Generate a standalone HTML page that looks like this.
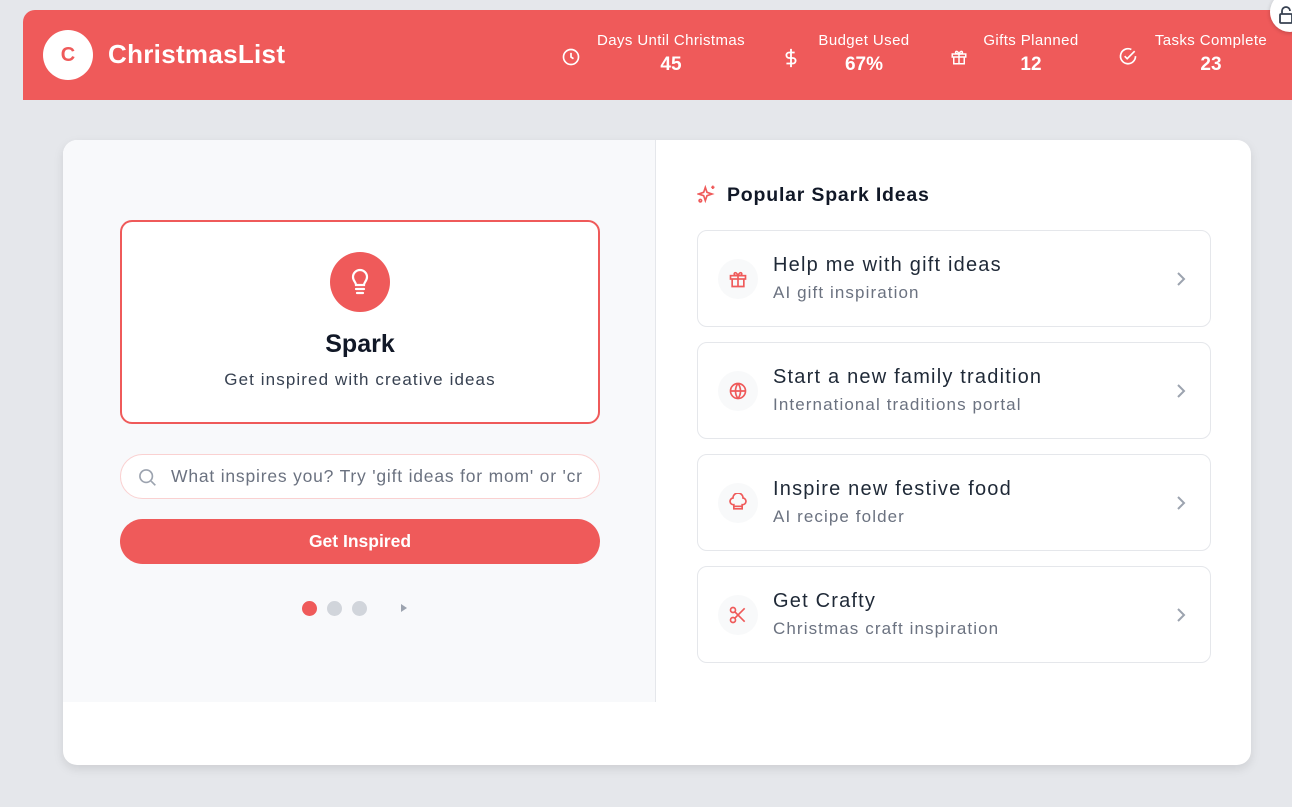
<!DOCTYPE html>
<html><head><meta charset="utf-8"><style>
*{box-sizing:border-box;margin:0;padding:0}
body{width:1292px;height:807px;background:#e5e7eb;font-family:"Liberation Sans",sans-serif;position:relative;overflow:hidden}
.hdr{position:absolute;left:23px;top:10px;width:1280px;height:90px;background:#ef5a5a;border-radius:12px 0 0 0}
.logo{position:absolute;left:20px;top:20px;width:50px;height:50px;border-radius:50%;background:#fff;color:#ef5a5a;font-weight:bold;font-size:20px;text-align:center;line-height:50px}
.brand{position:absolute;left:85px;top:29px;color:#fff;font-weight:bold;font-size:26px;letter-spacing:0.3px}
.stat{position:absolute;top:22px;color:#fff;text-align:center}
.stat .l{font-size:15px;letter-spacing:0.4px}
.stat .v{font-size:19px;font-weight:bold;margin-top:5px}
.stat svg{position:absolute;top:15px}
.lock{position:absolute;left:1270px;top:-8px;width:40px;height:40px;border-radius:50%;background:#fff;box-shadow:0 1px 4px rgba(0,0,0,.2)}
.card{position:absolute;left:63px;top:140px;width:1188px;height:625px;background:#fff;border-radius:14px;box-shadow:0 4px 10px rgba(0,0,0,.1);overflow:hidden}
.left{position:absolute;left:0;top:0;width:593px;height:562px;background:#f8f9fb;border-right:1px solid #e5e7eb}
.spark{position:absolute;left:57px;top:80px;width:480px;height:204px;border:2px solid #ef5a5a;border-radius:12px;background:#fff;text-align:center}
.bulb{position:absolute;left:208px;top:30px;width:60px;height:60px;border-radius:50%;background:#ef5a5a}
.spark h2{position:absolute;left:0;right:0;top:108px;font-size:25px;color:#111827}
.spark p{position:absolute;left:0;right:0;top:148px;font-size:17px;color:#374151;letter-spacing:1.1px}
.search{position:absolute;left:57px;top:314px;width:480px;height:45px;border:1px solid #fad1d1;border-radius:23px;background:#fff;font-size:17.5px;color:#6b7280;line-height:43px;padding-left:50px;white-space:nowrap;overflow:hidden;letter-spacing:0.8px}
.btn{position:absolute;left:57px;top:379px;width:480px;height:45px;border-radius:23px;background:#ef5a5a;color:#fff;font-weight:bold;font-size:17.5px;text-align:center;line-height:45px}
.dot{position:absolute;top:461px;width:15px;height:15px;border-radius:50%;background:#d1d5db}
.rh{position:absolute;left:664px;top:44px;font-size:19.5px;font-weight:bold;color:#111827;letter-spacing:0.8px}
.item{position:absolute;left:634px;width:514px;height:97px;border:1px solid #e5e7eb;border-radius:10px;background:#fff}
.item .ic{position:absolute;left:20px;top:28px;width:40px;height:40px;border-radius:50%;background:#f8f9fa}
.item .ic svg{position:absolute;left:10px;top:10px}
.item .t{position:absolute;left:75px;top:23px;font-size:20px;color:#1f2937;letter-spacing:1.2px}
.item .s{position:absolute;left:75px;top:52px;font-size:17px;color:#6b7280;letter-spacing:1.1px}
.item .ch{position:absolute;right:24px;top:40px}
</style></head><body>
<div class="hdr">
<div class="logo">C</div>
<div class="brand">ChristmasList</div>
<div class="stat" style="left:563px;width:170px"><svg style="left:-25px" width="20" height="20" viewBox="0 0 24 24" fill="none" stroke="#fff" stroke-width="2"><circle cx="12" cy="12" r="9"/><path d="M12 7v5l3 2"/></svg><div class="l">Days Until Christmas</div><div class="v">45</div></div>
<div class="stat" style="left:785px;width:112px"><svg style="left:-25px" width="16" height="22" viewBox="0 0 16 24" fill="none" stroke="#fff" stroke-width="2"><path d="M8 2v20M12 6H6a3 3 0 0 0 0 6h4a3 3 0 0 1 0 6H3"/></svg><div class="l">Budget Used</div><div class="v">67%</div></div>
<div class="stat" style="left:952px;width:112px"><svg style="left:-25px" width="18" height="20" viewBox="0 0 24 24" fill="none" stroke="#fff" stroke-width="2"><rect x="3" y="8" width="18" height="4"/><path d="M12 8v13M19 12v9H5v-9M12 8C10 3 7 4 7.5 6.5 8 8 12 8 12 8M12 8c2-5 5-4 4.5-1.5C16 8 12 8 12 8"/></svg><div class="l">Gifts Planned</div><div class="v">12</div></div>
<div class="stat" style="left:1122px;width:132px"><svg style="left:-27px" width="20" height="20" viewBox="0 0 24 24" fill="none" stroke="#fff" stroke-width="2"><path d="M21 11a9 9 0 1 1-5-8"/><path d="M8 11l3 3 9-9"/></svg><div class="l">Tasks Complete</div><div class="v">23</div></div>
</div>
<div class="lock"><svg style="position:absolute;left:8px;top:14px" width="16" height="18" viewBox="0 0 16 18" fill="none" stroke="#374151" stroke-width="1.8"><rect x="2" y="8" width="12" height="9" rx="1"/><path d="M4 8V5a4 4 0 0 1 8 0"/></svg></div>
<div class="card">
<div class="left">
<div class="spark"><div class="bulb"><svg style="position:absolute;left:18px;top:16px" width="24" height="28" viewBox="0 0 24 28" fill="none" stroke="#fff" stroke-width="2.2" stroke-linecap="round"><path d="M8 17c0-3-3-4-3-8a7 7 0 0 1 14 0c0 4-3 5-3 8z"/><path d="M8 21h8M9 25h6"/></svg></div><h2>Spark</h2><p>Get inspired with creative ideas</p></div>
<div class="search"><svg style="position:absolute;left:16px;top:12px" width="20" height="20" viewBox="0 0 24 24" fill="none" stroke="#9ca3af" stroke-width="2"><circle cx="11" cy="11" r="7.5"/><path d="M17 17l5 5"/></svg>What inspires you? Try 'gift ideas for mom' or 'cr</div>
<div class="btn">Get Inspired</div>
<div class="dot" style="left:239px;background:#ef5a5a"></div>
<div class="dot" style="left:264px"></div>
<div class="dot" style="left:289px"></div>
<svg style="position:absolute;left:337px;top:464px" width="7" height="8" viewBox="0 0 7 8"><path d="M1 0l6 4-6 4z" fill="#9ca3af"/></svg>
</div>
<svg style="position:absolute;left:634px;top:44px" width="20" height="20" viewBox="0 0 24 24" fill="none" stroke="#ef5a5a" stroke-width="2"><path d="M10 4l2 6 6 2-6 2-2 6-2-6-6-2 6-2z"/><path d="M19 2v4M17 4h4"/><circle cx="4" cy="20" r="1.5"/></svg>
<div class="rh">Popular Spark Ideas</div>
<div class="item" style="top:90px"><div class="ic"><svg width="20" height="20" viewBox="0 0 24 24" fill="none" stroke="#ef5a5a" stroke-width="2"><rect x="3" y="8" width="18" height="4"/><path d="M12 8v13M19 12v9H5v-9M12 8C10 3 7 4 7.5 6.5 8 8 12 8 12 8M12 8c2-5 5-4 4.5-1.5C16 8 12 8 12 8"/></svg></div><div class="t">Help me with gift ideas</div><div class="s">AI gift inspiration</div><svg class="ch" width="10" height="16" viewBox="0 0 10 16" fill="none" stroke="#9ca3af" stroke-width="2"><path d="M2 2l6 6-6 6"/></svg></div>
<div class="item" style="top:202px"><div class="ic"><svg width="20" height="20" viewBox="0 0 24 24" fill="none" stroke="#ef5a5a" stroke-width="2"><circle cx="12" cy="12" r="9"/><path d="M3 12h18M12 3c-4 5-4 13 0 18M12 3c4 5 4 13 0 18"/></svg></div><div class="t">Start a new family tradition</div><div class="s">International traditions portal</div><svg class="ch" width="10" height="16" viewBox="0 0 10 16" fill="none" stroke="#9ca3af" stroke-width="2"><path d="M2 2l6 6-6 6"/></svg></div>
<div class="item" style="top:314px"><div class="ic"><svg width="20" height="20" viewBox="0 0 24 24" fill="none" stroke="#ef5a5a" stroke-width="2"><path d="M7 14a4 4 0 0 1-1-8 6 6 0 0 1 12 0 4 4 0 0 1-1 8v5H7z"/><path d="M7 16h10"/></svg></div><div class="t">Inspire new festive food</div><div class="s">AI recipe folder</div><svg class="ch" width="10" height="16" viewBox="0 0 10 16" fill="none" stroke="#9ca3af" stroke-width="2"><path d="M2 2l6 6-6 6"/></svg></div>
<div class="item" style="top:426px"><div class="ic"><svg width="20" height="20" viewBox="0 0 24 24" fill="none" stroke="#ef5a5a" stroke-width="2"><circle cx="6" cy="6" r="3"/><circle cx="6" cy="18" r="3"/><path d="M8.5 8.5L20 20M8.5 15.5L20 4"/></svg></div><div class="t">Get Crafty</div><div class="s">Christmas craft inspiration</div><svg class="ch" width="10" height="16" viewBox="0 0 10 16" fill="none" stroke="#9ca3af" stroke-width="2"><path d="M2 2l6 6-6 6"/></svg></div>
</div>
</body></html>
